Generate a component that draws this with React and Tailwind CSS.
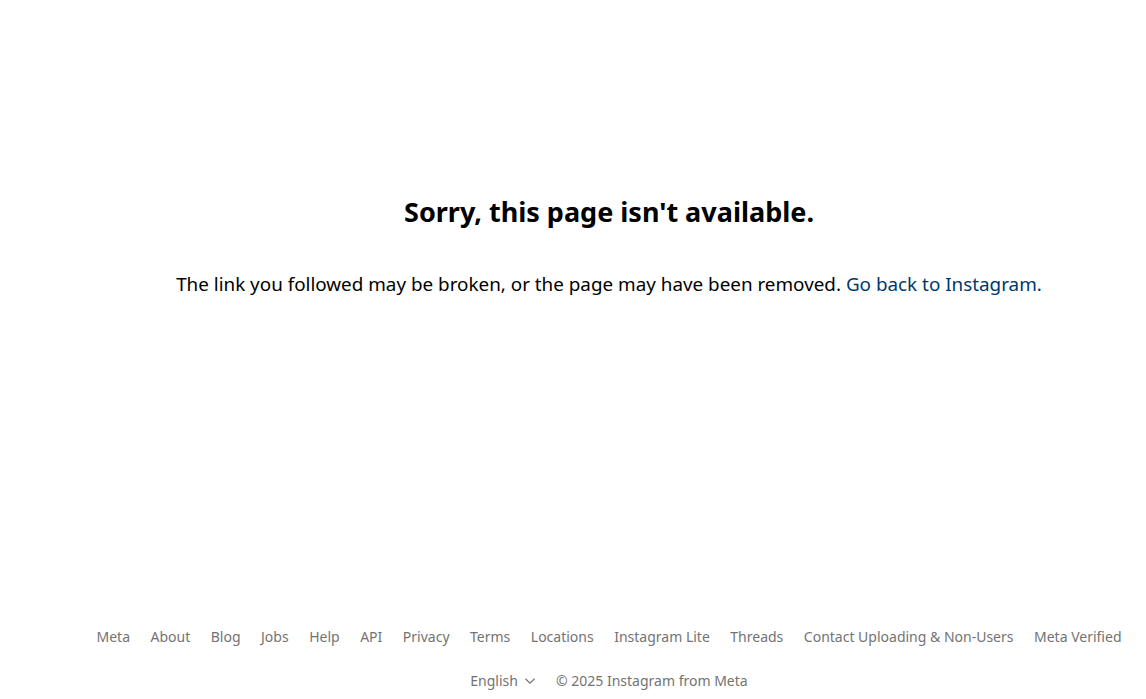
import React from 'react';

const links = [
  'Meta',
  'About',
  'Blog',
  'Jobs',
  'Help',
  'API',
  'Privacy',
  'Terms',
  'Locations',
  'Instagram Lite',
  'Threads',
  'Contact Uploading & Non-Users',
  'Meta Verified',
];

export default function App() {
  return (
    <div className="flex h-[699px] bg-white font-['Noto_Sans',sans-serif]">
      {/* empty nav rail */}
      <aside className="w-[72px] shrink-0" />

      <main className="flex flex-1 flex-col">
        <section className="flex flex-1 flex-col items-center pt-[193px] text-center">
          <h2 className="text-[27px] font-bold leading-[38px] text-black">
            Sorry, this page isn't available.
          </h2>
          <p className="mt-[41px] text-[18.85px] leading-[24px] text-black">
            The link you followed may be broken, or the page may have been removed.{' '}
            <a href="#" className="text-[#00376b]">
              Go back to Instagram.
            </a>
          </p>
        </section>

        <footer className="flex flex-col items-center pb-[8px] text-[14px] text-[#737373]">
          <ul className="flex flex-wrap justify-center gap-x-[20.5px]">
            {links.map((l) => (
              <li key={l} className="leading-[20px]">
                <a href="#">{l}</a>
              </li>
            ))}
          </ul>
          <div className="mt-[24px] flex items-center gap-[20px] leading-[20px]">
            <span className="flex items-center gap-[6px]">
              English
              <svg width="12" height="12" viewBox="0 0 12 12" fill="none" stroke="currentColor" strokeWidth="1.2">
                <path d="M1.5 3.75 6 8.25l4.5-4.5" />
              </svg>
            </span>
            <span>© 2025 Instagram from Meta</span>
          </div>
        </footer>
      </main>
    </div>
  );
}
